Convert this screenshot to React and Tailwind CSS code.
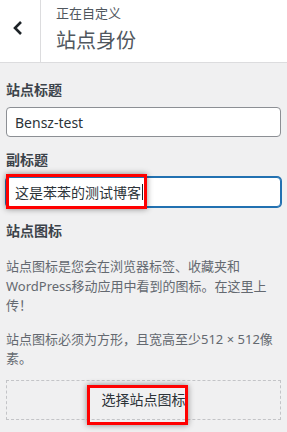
export default function App() {
  return (
    <div
      className="relative min-h-screen w-[287px] h-[432px] overflow-hidden bg-[#f0f0f1] text-[#2c3338]"
      style={{ fontFamily: '"Noto Sans", "Noto Sans CJK SC", sans-serif' }}
    >
      {/* header */}
      <div className="flex h-[63px] bg-white border-b border-[#dcdcde]">
        <div className="flex w-[41px] items-center justify-center border-r border-[#dcdcde]">
          <svg width="12" height="16" viewBox="0 0 12 16" className="ml-[-4px] mt-[-6px]">
            <path d="M9 2 L3 8 L9 14" fill="none" stroke="#1d2327" strokeWidth="2.6" />
          </svg>
        </div>
        <div className="pl-[15px] pt-[5px] text-[#50575e]">
          <div className="text-[13px] leading-[17px]">正在自定义</div>
          <div className="mt-[6px] text-[20px] leading-[26px]">站点身份</div>
        </div>
      </div>

      {/* fields */}
      <div className="px-[6px]">
        <div className="mt-[17px] text-[14px] leading-5 font-semibold text-[#3c434a]">站点标题</div>
        <div className="mt-[7px] flex h-[30px] items-center rounded-[4px] border border-[#8c8f94] bg-white px-[8px] text-[14px]">
          Bensz-test
        </div>

        <div className="mt-[13px] text-[14px] leading-5 font-semibold text-[#3c434a]">副标题</div>
        <div className="mt-[7px] flex h-[30px] items-center rounded-[4px] border border-[#2271b1] shadow-[0_0_0_1px_#2271b1] bg-white px-[8px] text-[14px]">
          这是苯苯的测试博客
          <span className="ml-[1px] inline-block h-[16px] w-px bg-[#1d2327]" />
        </div>

        <div className="mt-[14px] text-[14px] leading-5 font-semibold text-[#3c434a]">站点图标</div>
        <p className="mt-[16px] text-[13px] leading-[19.5px] text-[#646970]">
          站点图标是您会在浏览器标签、收藏夹和WordPress移动应用中看到的图标。在这里上传！
        </p>
        <p className="mt-[14px] text-[13px] leading-[19.5px] text-[#646970]">
          站点图标必须为方形，且宽高至少512 × 512像素。
        </p>
        <div className="mt-[11px] flex h-[40px] items-center justify-center border border-dashed border-[#c3c4c7] text-[14px] text-[#2c3338]">
          选择站点图标
        </div>
      </div>

      {/* annotation boxes */}
      <div className="absolute left-[6px] top-[174px] h-[35px] w-[141px] border-[3px] border-[#ff0000] shadow-[0_0_6px_rgba(0,0,0,0.45)]" />
      <div className="absolute left-[87px] top-[385px] h-[40px] w-[101px] border-[3px] border-[#ff0000] shadow-[0_0_6px_rgba(0,0,0,0.45)]" />
    </div>
  )
}
